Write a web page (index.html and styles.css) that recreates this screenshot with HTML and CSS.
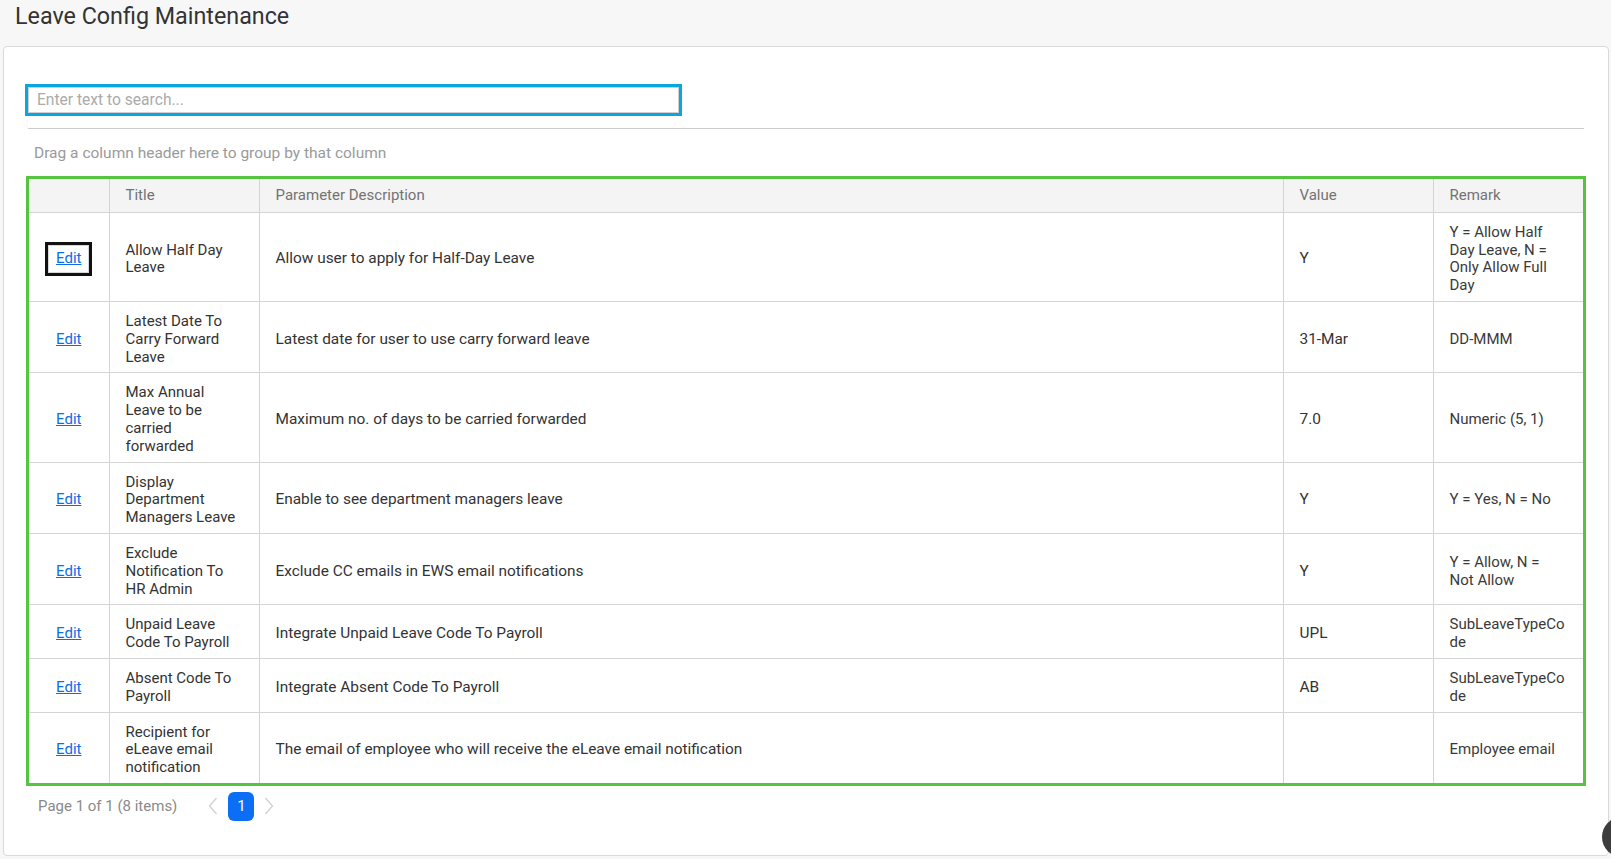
FILE: index.html
```html
<!DOCTYPE html>
<html lang="en">
<head>
<meta charset="utf-8">
<title>Leave Config Maintenance</title>
<link rel="stylesheet" href="styles.css">
</head>
<body>
<header class="page-header">
  <h1 class="page-title">Leave Config Maintenance</h1>
</header>
<main class="card">
  <div class="search-row">
    <input class="search-input" type="text" placeholder="Enter text to search...">
  </div>
  <div class="divider"></div>
  <div class="group-panel">Drag a column header here to group by that column</div>
  <div class="grid-wrap">
    <table class="grid">
      <colgroup>
        <col class="c-edit">
        <col class="c-title">
        <col class="c-desc">
        <col class="c-value">
        <col class="c-remark">
      </colgroup>
      <thead>
        <tr>
          <th></th>
          <th>Title</th>
          <th>Parameter Description</th>
          <th>Value</th>
          <th>Remark</th>
        </tr>
      </thead>
      <tbody>
        <tr>
          <td class="edit-cell"><a href="#" class="edit-link focused">Edit</a></td>
          <td>Allow Half Day Leave</td>
          <td class="wide">Allow user to apply for Half-Day Leave</td>
          <td class="wide">Y</td>
          <td class="remark">Y = Allow Half Day Leave, N = Only Allow Full Day</td>
        </tr>
        <tr>
          <td class="edit-cell"><a href="#" class="edit-link">Edit</a></td>
          <td>Latest Date To Carry Forward Leave</td>
          <td class="wide">Latest date for user to use carry forward leave</td>
          <td class="wide">31-Mar</td>
          <td class="remark">DD-MMM</td>
        </tr>
        <tr>
          <td class="edit-cell"><a href="#" class="edit-link">Edit</a></td>
          <td>Max Annual Leave to be carried forwarded</td>
          <td class="wide">Maximum no. of days to be carried forwarded</td>
          <td class="wide">7.0</td>
          <td class="remark">Numeric (5, 1)</td>
        </tr>
        <tr>
          <td class="edit-cell"><a href="#" class="edit-link">Edit</a></td>
          <td>Display Department Managers Leave</td>
          <td class="wide">Enable to see department managers leave</td>
          <td class="wide">Y</td>
          <td class="remark">Y = Yes, N = No</td>
        </tr>
        <tr>
          <td class="edit-cell"><a href="#" class="edit-link">Edit</a></td>
          <td>Exclude Notification To HR Admin</td>
          <td class="wide">Exclude CC emails in EWS email notifications</td>
          <td class="wide">Y</td>
          <td class="remark">Y = Allow, N = Not Allow</td>
        </tr>
        <tr>
          <td class="edit-cell"><a href="#" class="edit-link">Edit</a></td>
          <td>Unpaid Leave Code To Payroll</td>
          <td class="wide">Integrate Unpaid Leave Code To Payroll</td>
          <td class="wide">UPL</td>
          <td class="remark">SubLeaveTypeCode</td>
        </tr>
        <tr>
          <td class="edit-cell"><a href="#" class="edit-link">Edit</a></td>
          <td>Absent Code To Payroll</td>
          <td class="wide">Integrate Absent Code To Payroll</td>
          <td class="wide">AB</td>
          <td class="remark">SubLeaveTypeCode</td>
        </tr>
        <tr>
          <td class="edit-cell"><a href="#" class="edit-link">Edit</a></td>
          <td>Recipient for eLeave email notification</td>
          <td class="wide">The email of employee who will receive the eLeave email notification</td>
          <td class="wide"></td>
          <td class="remark">Employee email</td>
        </tr>
      </tbody>
    </table>
  </div>
  <div class="pager">
    <span class="pager-info">Page 1 of 1 (8 items)</span>
    <span class="pager-nav">
      <svg class="chev" width="10" height="18" viewBox="0 0 10 18"><polyline points="8.5,1 1.5,9 8.5,17" fill="none" stroke="#d2d2d2" stroke-width="1.4"/></svg>
      <span class="page-btn">1</span>
      <svg class="chev" width="10" height="18" viewBox="0 0 10 18"><polyline points="1.5,1 8.5,9 1.5,17" fill="none" stroke="#d2d2d2" stroke-width="1.4"/></svg>
    </span>
  </div>
</main>
<div class="fab"></div>
</body>
</html>
```

FILE: styles.css
```css
* { box-sizing: border-box; }

html, body {
  margin: 0;
  padding: 0;
}

body {
  background: #f7f7f7;
  font-family: Roboto, "Liberation Sans", Arial, sans-serif;
  font-size: 15px;
  color: #333;
  overflow: hidden;
}

.page-header {
  height: 46px;
  padding: 3px 15px 0;
}

.page-title {
  margin: 0;
  font-size: 23.3px;
  line-height: 27px;
  font-weight: 400;
  color: #333;
}

.card {
  margin: 0 2px 0 3px;
  background: #fff;
  border: 1px solid #d9d9d9;
  border-radius: 4px;
  padding: 37px 21px 34px;
}

.search-row {
  display: flex;
}

.search-input {
  margin: 3px;
  width: 651px;
  height: 26px;
  border: 1px solid #cfcfcf;
  outline: 3px solid #0aa6e0;
  padding: 0 8px;
  font-family: inherit;
  font-size: 15.6px;
  color: #333;
  background: #fff;
}

.search-input::placeholder {
  color: #ababab;
}

.divider {
  margin: 12px 3px 0;
  height: 1px;
  background: #cccccc;
}

.group-panel {
  padding: 16px 0 0 9px;
  font-size: 15.5px;
  line-height: 17.8px;
  color: #9a9a9a;
  height: 47px;
}

.grid-wrap {
  margin: 0 1px;
  border: 3px solid #55c541;
}

.grid {
  width: 100%;
  table-layout: fixed;
  border-collapse: collapse;
  border-style: hidden;
}

.c-edit { width: 80px; }
.c-title { width: 150px; }
.c-desc { width: 1024px; }
.c-value { width: 150px; }

.grid th,
.grid td {
  border: 1px solid #d4d4d4;
  text-align: left;
  vertical-align: middle;
  line-height: 17.8px;
  font-size: 15px;
}

.grid th {
  background: #f4f4f4;
  font-weight: 400;
  color: #737373;
  padding: 8px 17px 7px 16px;
}

.grid td {
  padding: 11px 17px 6px 16px;
  color: #333;
}

.grid td.wide {
  font-size: 15.4px;
}

.grid td.remark {
  overflow-wrap: anywhere;
  color: #3a3a3a;
}

.grid td.edit-cell {
  text-align: center;
  padding-left: 4px;
  padding-right: 4px;
}

.edit-link {
  color: #0b6ee8;
  text-decoration: underline;
}

.edit-link.focused {
  display: inline-block;
  padding: 5px 8px;
  border: 3px solid #111;
  box-shadow: inset 0 0 0 1px #d8d8d8;
  line-height: 17.8px;
}

.pager {
  display: flex;
  align-items: center;
  margin-top: 6px;
  padding-left: 13px;
  height: 29px;
}

.pager-info {
  color: #8a8a8a;
  font-size: 15px;
}

.pager-nav {
  display: flex;
  align-items: center;
  margin-left: 31px;
}

.chev {
  display: block;
}

.page-btn {
  display: flex;
  align-items: center;
  justify-content: center;
  width: 26px;
  height: 29px;
  margin: 0 10px;
  background: #0b6ef5;
  color: #fff;
  border-radius: 6px;
  font-size: 15px;
}

.fab {
  position: fixed;
  left: 1602px;
  top: 817px;
  width: 40px;
  height: 40px;
  border-radius: 50%;
  background: #3d3d3d;
}
```
